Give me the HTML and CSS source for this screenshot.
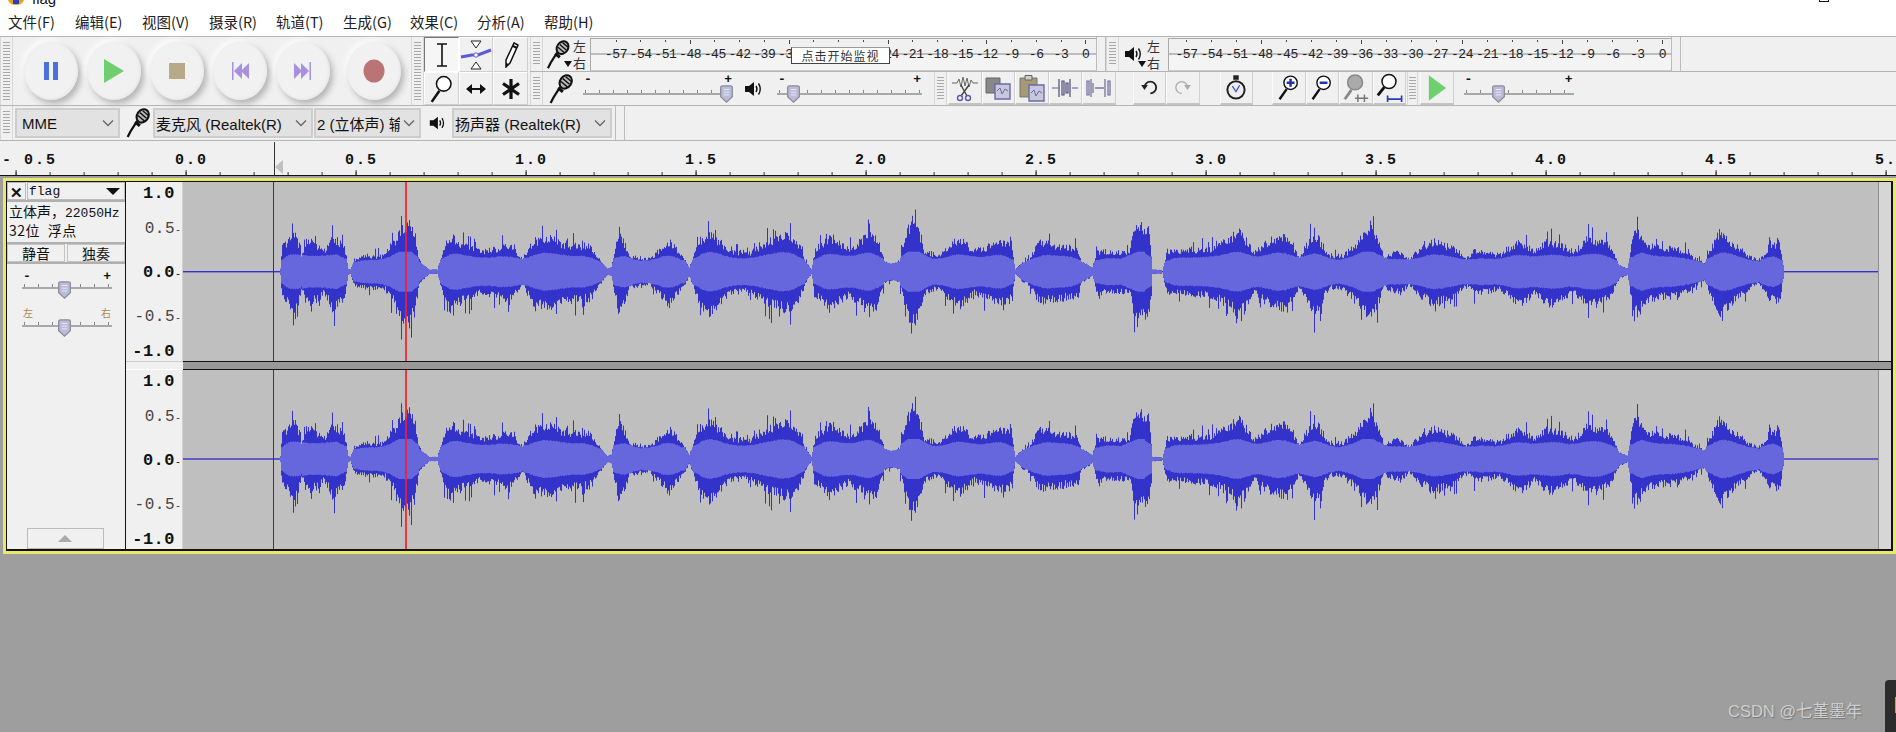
FILE: index.html
```html
<!DOCTYPE html>
<html lang="zh">
<head>
<meta charset="utf-8">
<title>flag</title>
<link rel="stylesheet" href="styles.css">
</head>
<body>
<svg class="defs" width="0" height="0">
  <symbol id="mic" viewBox="0 0 26 34">
    <path d="M2 32 L5 26 L12 15" fill="none" stroke="#111" stroke-width="2.4"/>
    <path d="M10 16 L15 20" stroke="#111" stroke-width="3.4"/>
    <ellipse cx="18" cy="9.5" rx="6" ry="7.5" transform="rotate(35 18 9.5)" fill="#bbb" stroke="#111" stroke-width="2.2"/>
    <path d="M13 9 L20 15 M15 6 L22 12 M18 4 L24 9" stroke="#111" stroke-width="1.5"/>
  </symbol>
  <symbol id="spk" viewBox="0 0 20 20">
    <path d="M2 7 H6 L11 3 V17 L6 13 H2 Z" fill="#111"/>
    <path d="M13 7 Q15 10 13 13 M15.5 4.5 Q19 10 15.5 15.5" fill="none" stroke="#111" stroke-width="1.4"/>
  </symbol>
  <symbol id="loupe" viewBox="0 0 28 34">
    <path d="M2 32 L11 19" stroke="#111" stroke-width="3"/>
    <circle cx="16" cy="11" r="8.5" fill="#fff" stroke="#111" stroke-width="1.8"/>
  </symbol>
  <symbol id="chev" viewBox="0 0 12 8">
    <path d="M1 1.5 L6 6.5 L11 1.5" fill="none" stroke="#666" stroke-width="1.3"/>
  </symbol>
  <symbol id="thumb" viewBox="0 0 16 20">
    <path d="M1.5 3 Q1.5 1 4 1 H12 Q14.5 1 14.5 3 V13 L8 19 L1.5 13 Z" fill="#b9bcd6" stroke="#8a8a9a" stroke-width="1.4"/>
    <path d="M5 5 H11 M5 8 H11 M5 11 H11" stroke="#eef" stroke-width="1"/>
  </symbol>
</svg>

<div class="titlebar">
  <svg class="app-icon" width="16" height="5" viewBox="0 0 16 5"><path d="M0 0 H16 Q14 5 8 5 Q2 5 0 0Z" fill="#e8a020"/><path d="M5 0 H11 V4 H5Z" fill="#2a40b0"/></svg>
  <span class="title-text">flag</span>
  <span class="win-max"></span>
  <span class="win-close">✕</span>
</div>

<nav class="menubar">
  <span>文件(F)</span><span>编辑(E)</span><span>视图(V)</span><span>摄录(R)</span><span>轨道(T)</span><span>生成(G)</span><span>效果(C)</span><span>分析(A)</span><span>帮助(H)</span>
</nav>

<section class="toprow">
  <div class="grip"></div>
  <div class="transport">
    <button class="tbtn"><svg width="20" height="20" viewBox="0 0 20 20"><path d="M3 1 H8 V19 H3Z M12 1 H17 V19 H12Z" fill="#4a70dc"/></svg></button>
    <button class="tbtn"><svg width="24" height="26" viewBox="0 0 24 26"><path d="M2 1 L22 13 L2 25Z" fill="#6fcf6f"/></svg></button>
    <button class="tbtn"><svg width="20" height="20" viewBox="0 0 20 20"><path d="M2 2 H18 V18 H2Z" fill="#b8aa88"/></svg></button>
    <button class="tbtn"><svg width="20" height="20" viewBox="0 0 20 20"><path d="M2 1 H3.5 V19 H2Z M19 2 V18 L11 10Z M12 2 V18 L4 10Z" fill="#a78fe2"/></svg></button>
    <button class="tbtn"><svg width="20" height="20" viewBox="0 0 20 20"><path d="M16.5 1 H18 V19 H16.5Z M1 2 V18 L9 10Z M8 2 V18 L16 10Z" fill="#a78fe2"/></svg></button>
    <button class="tbtn tbtn-rec"><svg width="24" height="26" viewBox="0 0 24 26"><ellipse cx="12" cy="13" rx="10.5" ry="11.5" fill="#bb7474"/></svg></button>
  </div>
  <div class="grip"></div>
  <div class="tools">
    <button class="tool tool-on"><svg width="14" height="24" viewBox="0 0 14 24"><path d="M2 1 H12 M2 23 H12 M7 1 V23" stroke="#111" stroke-width="1.6" fill="none"/></svg></button>
    <button class="tool"><svg width="32" height="30" viewBox="0 0 32 30"><path d="M11 1 H21 L16 8Z M11 29 H21 L16 22Z" fill="#fff" stroke="#222"/><path d="M1 17 L12 15 H18 L31 10" stroke="#5a5ad8" stroke-width="3" fill="none"/><circle cx="16" cy="15" r="2.2" fill="#fff" stroke="#5a5ad8"/></svg></button>
    <button class="tool"><svg width="16" height="26" viewBox="0 0 16 26"><path d="M11 1 L15 3 L7 21 L3 25 L3 18Z" fill="#fff" stroke="#111" stroke-width="1.5"/><path d="M10 4 L14 6" stroke="#111" stroke-width="2"/><path d="M3 25 L3 21 L6 22Z" fill="#111"/></svg></button>
    <button class="tool"><svg width="24" height="30"><use href="#loupe"/></svg></button>
    <button class="tool"><svg width="22" height="12" viewBox="0 0 22 12"><path d="M5 6 H17" stroke="#111" stroke-width="2"/><path d="M1 6 L7 1 V11Z M21 6 L15 1 V11Z" fill="#111"/></svg></button>
    <button class="tool"><svg width="20" height="22" viewBox="0 0 20 22"><path d="M10 1 V21 M2 5.5 L18 16.5 M18 5.5 L2 16.5" stroke="#111" stroke-width="3.2"/></svg></button>
  </div>
  <div class="rightcol">
    <div class="meterrow">
      <div class="grip"></div>
      <div class="mic-wrap"><svg class="mic-big" width="26" height="31"><use href="#mic"/></svg><span class="caret"></span></div>
      <div class="lr"><span>左</span><span>右</span></div>
      <div class="meter meter-rec" id="meterRec"></div>
      <div class="dbl-sep"></div>
      <div class="grip"></div>
      <div class="mic-wrap spk-wrap"><svg width="20" height="20"><use href="#spk"/></svg><span class="caret"></span></div>
      <div class="lr"><span>左</span><span>右</span></div>
      <div class="meter meter-play" id="meterPlay"></div>
      <div class="dbl-sep"></div>
    </div>
    <div class="mixrow">
      <div class="grip"></div>
      <svg class="mic-small" width="26" height="32"><use href="#mic"/></svg>
      <div class="slider slider-rec"><span class="sl-minus">-</span><span class="sl-plus">+</span><i class="sl-track"></i><svg class="sl-thumb" style="left:136px" width="15" height="18"><use href="#thumb"/></svg></div>
      <svg class="spk-small" width="20" height="20"><use href="#spk"/></svg>
      <div class="slider slider-play"><span class="sl-minus">-</span><span class="sl-plus">+</span><i class="sl-track"></i><svg class="sl-thumb" style="left:9px" width="15" height="18"><use href="#thumb"/></svg></div>
      <div class="grip grip-edit"></div>
      <div class="editgroup">
        <button class="ebtn"><svg width="28" height="28" viewBox="0 0 28 28"><path d="M1 9 H6 L8 5 L10 13 L12 3 L14 12 L16 4 L18 13 L20 6 L22 9 H27" fill="none" stroke="#666" stroke-width="1"/><path d="M18 11 L10 22 M10 11 L16 22" stroke="#444" stroke-width="1.4"/><circle cx="9" cy="24" r="2.5" fill="none" stroke="#5a5aa8" stroke-width="1.4"/><circle cx="17" cy="24" r="2.5" fill="none" stroke="#5a5aa8" stroke-width="1.4"/></svg></button>
        <button class="ebtn"><svg width="28" height="26" viewBox="0 0 28 26"><path d="M2 3 H16 V18 H2Z" fill="#888" stroke="#666"/><path d="M11 9 H26 V24 H11Z" fill="#c8c8dc" stroke="#6a6aa8" stroke-width="1.4"/><path d="M13 16 L16 13 L18 19 L21 14 L24 16" fill="none" stroke="#6a6aa8"/></svg></button>
        <button class="ebtn"><svg width="28" height="28" viewBox="0 0 28 28"><path d="M2 4 H19 V23 H2Z" fill="#a59a74" stroke="#777"/><path d="M7 1.5 H14 V6 H7Z" fill="#ccc" stroke="#666"/><path d="M11 11 H26 V27 H11Z" fill="#c8c8dc" stroke="#6a6aa8" stroke-width="1.4"/><path d="M13 19 L16 16 L18 22 L21 17 L24 19" fill="none" stroke="#6a6aa8"/></svg></button>
        <button class="ebtn"><svg width="28" height="22" viewBox="0 0 28 22"><path d="M1 11 H7 M21 11 H27" stroke="#5a5a88" stroke-width="1.2"/><path d="M8 2 V20 M11 4 H13 V18 H11Z M15 6 H17 V16 H15Z M19 2 V20" fill="none" stroke="#4a4a78" stroke-width="1.2"/></svg></button>
        <button class="ebtn"><svg width="28" height="22" viewBox="0 0 28 22"><path d="M10 11 H19" stroke="#5a5a88" stroke-width="1.2"/><path d="M2 4 H4 V18 H2Z M6 2 V20 M8 6 V16 M20 2 V20 M23 4 H25 V18 H23Z" fill="none" stroke="#6a6a98" stroke-width="1.2"/></svg></button>
      </div>
      <div class="undogroup">
        <button class="ebtn"><svg width="17" height="15" viewBox="0 0 20 18"><path d="M4 9 A7 7 0 1 1 11 16" fill="none" stroke="#222" stroke-width="2.2"/><path d="M0 6 H8 L4 12Z" fill="#222"/></svg></button>
        <button class="ebtn"><svg width="17" height="15" viewBox="0 0 20 18"><path d="M16 9 A7 7 0 1 0 9 16" fill="none" stroke="#aaa" stroke-width="1.6"/><path d="M20 6 H12 L16 12Z" fill="#aaa"/></svg></button>
      </div>
      <button class="ebtn ebtn-clock"><svg width="20" height="28" viewBox="0 0 22 30"><path d="M8 1 H14 V6 H8Z" fill="#222"/><circle cx="11" cy="17" r="9.5" fill="#eee" stroke="#222" stroke-width="2.2"/><path d="M7 13 L11 19 L15 12" fill="none" stroke="#3a4ac0" stroke-width="1.3"/></svg></button>
      <div class="zoomgroup">
        <button class="ebtn"><svg width="22" height="27" viewBox="0 0 28 34"><use href="#loupe" width="28" height="34"/><path d="M11 11 H21 M16 6 V16" stroke="#2233aa" stroke-width="3.2"/></svg></button>
        <button class="ebtn"><svg width="22" height="27" viewBox="0 0 28 34"><use href="#loupe" width="28" height="34"/><path d="M11 11 H21" stroke="#2233aa" stroke-width="3.2"/></svg></button>
        <button class="ebtn"><svg width="28" height="30" viewBox="0 0 30 32"><path d="M3 28 L10 18" stroke="#888" stroke-width="3"/><circle cx="14" cy="10" r="8" fill="#aaa" stroke="#888" stroke-width="1.6"/><path d="M14 27 H28 M17 23 V31 M24 23 V31" stroke="#777" stroke-width="1.6"/></svg></button>
        <button class="ebtn"><svg width="28" height="30" viewBox="0 0 30 32"><path d="M3 24 L10 15" stroke="#111" stroke-width="3"/><circle cx="15" cy="9" r="7.5" fill="#fff" stroke="#111" stroke-width="1.6"/><path d="M13 28 H29 M13.5 24 V31 M28.5 24 V31" stroke="#2a3ab8" stroke-width="1.8"/></svg></button>
      </div>
      <div class="grip grip-play"></div>
      <button class="ebtn ebtn-play"><svg width="20" height="28" viewBox="0 0 22 30"><path d="M2 1 L21 15 L2 29Z" fill="#6fcf6f"/></svg></button>
      <div class="slider slider-speed"><span class="sl-minus">-</span><span class="sl-plus">+</span><i class="sl-track"></i><svg class="sl-thumb" style="left:27px" width="15" height="18"><use href="#thumb"/></svg></div>
    </div>
  </div>
</section>

<section class="devicerow">
  <div class="grip"></div>
  <div class="combo combo-host"><span>MME</span><svg width="12" height="8"><use href="#chev"/></svg></div>
  <svg class="dev-mic" width="26" height="32"><use href="#mic"/></svg>
  <div class="combo combo-in"><span>麦克风 (Realtek(R)</span><svg width="12" height="8"><use href="#chev"/></svg></div>
  <div class="combo combo-ch"><span>2 (立体声) 输入声道</span><svg width="12" height="8"><use href="#chev"/></svg></div>
  <svg class="dev-spk" width="18" height="18"><use href="#spk"/></svg>
  <div class="combo combo-out"><span>扬声器 (Realtek(R)</span><svg width="12" height="8"><use href="#chev"/></svg></div>
  <div class="dbl-sep"></div>
</section>

<section class="ruler">
  <span class="rcell rcell-first">- 0.5</span><span class="rcell">0.0</span><span class="rcell">0.5</span><span class="rcell">1.0</span><span class="rcell">1.5</span><span class="rcell">2.0</span><span class="rcell">2.5</span><span class="rcell">3.0</span><span class="rcell">3.5</span><span class="rcell">4.0</span><span class="rcell">4.5</span><span class="rcell">5.0</span>
  <i class="ruler-sel"></i>
</section>

<section class="track">
  <div class="panel">
    <div class="panel-head">
      <button class="p-close">✕</button>
      <button class="p-name"><span>flag</span><i class="p-arrow"></i></button>
    </div>
    <div class="p-info">
      <div>立体声，<span class="mono">22050Hz</span></div>
      <div class="p-info-2">32位 浮点</div>
    </div>
    <div class="p-btns"><button>静音</button><button>独奏</button></div>
    <div class="slider slider-gain"><span class="sl-minus">-</span><span class="sl-plus">+</span><i class="sl-track"></i><svg class="sl-thumb" style="left:35px" width="15" height="18"><use href="#thumb"/></svg></div>
    <div class="slider slider-pan"><span class="sl-minus">左</span><span class="sl-plus">右</span><i class="sl-track"></i><svg class="sl-thumb" style="left:35px" width="15" height="18"><use href="#thumb"/></svg></div>
    <div class="p-spacer"></div>
    <button class="p-collapse"><i></i></button>
  </div>
  <div class="channels">
    <div class="channel">
      <div class="vruler"><b>1.0</b><span>0.5</span><b>0.0</b><span>-0.5</span><b>-1.0</b></div>
      <div class="wave"><svg class="wave-svg" width="1695" height="179"></svg><i class="sel-line"></i><i class="play-line"></i></div>
      <div class="strip"></div>
    </div>
    <div class="divider"><div class="div-left"></div><div class="div-right"></div></div>
    <div class="channel">
      <div class="vruler"><b>1.0</b><span>0.5</span><b>0.0</b><span>-0.5</span><b>-1.0</b></div>
      <div class="wave"><svg class="wave-svg" width="1695" height="179"></svg><i class="sel-line"></i><i class="play-line"></i></div>
      <div class="strip"></div>
    </div>
  </div>
</section>

<div class="monitor-tip">点击开始监视</div>
<div class="watermark">CSDN @七堇墨年</div>
<div class="sidewidget"><i></i></div>
<script src="script.js"></script>
</body>
</html>
```
FILE: styles.css
```css
* { box-sizing: border-box; }
html, body { margin: 0; padding: 0; }
body {
  width: 1896px; height: 732px; overflow: hidden; position: relative;
  background: #9e9e9e;
  font-family: "Liberation Sans", "Noto Sans CJK SC", sans-serif;
  color: #111;
}
button { font: inherit; color: inherit; margin: 0; padding: 0; }
.defs { position: absolute; }

.titlebar { height: 7px; background: #fff; display: flex; overflow: hidden; padding-left: 8px; align-items: flex-start; }
.title-text { margin: -10px 0 0 8px; font-size: 15px; line-height: 17px; }
.win-max { margin-left: auto; width: 10px; height: 2px; border: 1px solid #111; border-top: 0; }
.win-close { margin: -9px 5px 0 52px; font-size: 12px; line-height: 12px; }

.menubar { height: 29px; background: #fff; display: flex; align-items: center; padding-left: 8px; font-size: 14.5px; font-family: "Noto Sans CJK SC", sans-serif; color: #222; }
.menubar span { flex: none; width: 67px; white-space: nowrap; }

.toprow { display: flex; height: 70px; background: #f0f0f0; border-top: 1px solid #b4b4b4; border-bottom: 1px solid #b4b4b4; }
.grip {
  flex: none; width: 13px; background: #f0f0f0 repeating-linear-gradient(#a8a8a8 0 1px, transparent 1px 3px) center / 7px calc(100% - 10px) no-repeat;
  border-left: 1px solid #d8d8d8; border-right: 1px solid #d8d8d8;
}
.transport { flex: none; width: 398px; display: flex; align-items: center; padding-left: 11px; gap: 9px; }
.tbtn {
  flex: none; width: 54px; height: 58px; border-radius: 50%; border: 0; display: flex; align-items: center; justify-content: center;
  background: #f1f1f1; box-shadow: 3px 4px 6px #b4b4b4, -3px -3px 4px #fafafa, inset -1px -1px 3px #e6e6e6;
}
.tbtn-rec { margin-left: 8px; }
.tools { flex: none; width: 104px; display: grid; grid-template-columns: 35px 34px 35px; grid-template-rows: 35px 33px; }
.tool { display: flex; align-items: center; justify-content: center; background: #f0f0f0; border: 1px solid; border-color: #fff #cfcfcf #cfcfcf #fff; }
.tool-on { border-color: #777 #fff #fff #777; background: #f6f6f6; }
.rightcol { flex: 1; display: flex; flex-direction: column; margin-left: 2px; }
.meterrow { flex: none; height: 35px; display: flex; border-bottom: 1px solid #b4b4b4; }
.mic-wrap { flex: none; width: 30px; position: relative; display: flex; align-items: center; padding-left: 2px; }
.spk-wrap { width: 28px; padding-left: 4px; }
.caret { position: absolute; right: 1px; bottom: 4px; border: 4px solid transparent; border-top: 6px solid #111; border-bottom: 0; }
.lr { flex: none; width: 17px; display: flex; flex-direction: column; justify-content: space-around; font-size: 13px; line-height: 15px; font-family: "Noto Sans CJK SC", sans-serif; color: #333; }
.meter {
  flex: none; display: flex; height: 33px; margin-top: 1px;
  border-left: 1px solid #aaa; border-top: 1px solid #aaa; border-bottom: 1px solid #ccc;
  background: linear-gradient(#f0f0f0 14px, #bdbdbd 14px, #bdbdbd 16px, #f4f4f4 16px);
  font: 13px/1 "Liberation Mono", monospace; color: #222;
}
.meter-rec { width: 506px; padding-left: 12.6px; }
.meter-rec .mcell { width: 24.73px; }
.meter-play { width: 503px; padding-left: 5px; margin-left: 4px; }
.mcell { flex: none; width: 25.05px; text-align: center; position: relative; padding-top: 9px; letter-spacing: -.4px; white-space: nowrap; }
.mcell::before { content: ""; position: absolute; left: 12px; top: 1px; width: 1px; height: 2px; background: #444; }
.mcell.major::before { height: 4px; }
.dbl-sep { flex: none; width: 10px; border-left: 1px solid #bbb; border-right: 1px solid #bbb; }

.mixrow { flex: 1; display: flex; align-items: center; }
.mixrow > .grip { align-self: stretch; }
.mic-small { flex: none; margin: 0 9px 0 5px; }
.spk-small { flex: none; margin: 0 14px 0 10px; }
.slider { flex: none; position: relative; height: 32px; }
.sl-minus, .sl-plus { position: absolute; top: 0; font: bold 13px/14px "Liberation Mono", "Noto Sans CJK SC", monospace; }
.sl-minus { left: 1px; }
.sl-plus { right: 1px; }
.sl-track {
  position: absolute; left: 0; right: 0; top: 14px; height: 8px; border-bottom: 2px solid #a8a8a8;
  background: linear-gradient(90deg, #888 1px, transparent 1px) 2px 3px / 14px 3px repeat-x;
}
.sl-thumb { position: absolute; top: 12px; }
.slider-rec { width: 150px; }
.slider-play { width: 145px; }
.slider-speed { width: 110px; margin-left: 10px; }
.grip-edit { margin-left: 12px; margin-right: 1px; }
.grip-play { margin-left: 1px; width: 11px; margin-right: 2px; }
.editgroup, .undogroup, .zoomgroup { flex: none; display: flex; align-self: stretch; }
.undogroup { margin-left: 17px; }
.zoomgroup { margin-left: 19px; }
.ebtn {
  flex: none; width: 33.5px; display: flex; align-items: center; justify-content: center; align-self: stretch;
  background: #f0f0f0; border: 0; border-left: 1px solid #fbfbfb; border-right: 1px solid #d0d0d0; border-bottom: 2px solid #c4c4c4;
}
.ebtn-clock { margin-left: 20px; }

.devicerow { display: flex; height: 35px; align-items: center; background: #f0f0f0; border-bottom: 1px solid #b4b4b4; font-size: 15px; font-family: "Liberation Sans", "Noto Sans CJK SC", sans-serif; }
.devicerow > .grip { align-self: stretch; }
.devicerow > .dbl-sep { align-self: stretch; margin-left: 3px; }
.combo { flex: none; height: 30px; display: flex; align-items: center; justify-content: space-between; background: #e2e2e2; border: 2px solid #cdcdcd; padding: 0 4px 0 1px; overflow: hidden; }
.combo span { flex: 1; overflow: hidden; white-space: nowrap; min-width: 0; }
.combo svg { flex: none; margin-left: 3px; }
.combo-host { width: 105px; margin-left: 2px; padding-left: 5px; }
.dev-mic { flex: none; margin: 0 2px 0 5px; }
.combo-in { width: 160px; }
.combo-ch { width: 107px; margin-left: 1px; }
.dev-spk { flex: none; margin: 0 6px 0 7px; }
.combo-out { width: 160px; }

.ruler {
  display: flex; height: 35px; padding: 10px 0 0 2px; position: relative; overflow: hidden;
  border-bottom: 1px solid #111; white-space: nowrap;
  font: bold 15px/20px "Liberation Mono", monospace; letter-spacing: 2px; color: #111;
  background-color: #f0f0f0;
  background-image: linear-gradient(90deg, #333 1px, transparent 1px), linear-gradient(90deg, #333 1px, transparent 1px);
  background-size: 34px 3px, 170px 5px;
  background-position: 15.6px 100%, 15.6px 100%;
  background-repeat: repeat-x;
}
.rcell { flex: none; width: 170px; }
.rcell-first { width: 173px; }
.ruler-sel { position: absolute; left: 274px; top: 1px; bottom: 0; width: 1px; background: #333; }
.ruler-sel::after { content: ""; position: absolute; left: 1px; bottom: 1px; border: 7px solid transparent; border-left: 0; border-right: 8px solid #c0c0c0; }

.track {
  display: flex; box-sizing: content-box; width: 1885px; height: 367px; margin: 2px 0 0 3px;
  border: 3px solid #e8e86c; background: #111; padding: 1px 2px 2px 0;
}
.panel { flex: none; width: 120px; background: #f0f0f0; border-right: 1px solid #111; border-left: 1px solid #111; display: flex; flex-direction: column; font-family: "Noto Sans CJK SC", sans-serif; font-size: 14px; }
.panel-head { display: flex; height: 20px; border-bottom: 2px solid #b0b0b0; }
.panel-head button { background: #f0f0f0; border: 1px solid #bbb; }
.p-close { flex: none; width: 19px; font-size: 15px; line-height: 15px; font-weight: bold; }
.p-name { flex: 1; margin-left: 1px; display: flex; align-items: center; justify-content: space-between; padding: 0 3px 0 1px; font: 13px "Liberation Mono", monospace; }
.p-arrow { border: 7px solid transparent; border-top: 7px solid #111; border-bottom: 0; margin-right: 1px; }
.p-info { height: 42px; padding: 0 0 0 2px; font-size: 14px; line-height: 19px; border-bottom: 2px solid #b0b0b0; white-space: nowrap; }
.p-info-2 { word-spacing: 4px; letter-spacing: .5px; }
.mono { font: 13px "Liberation Mono", monospace; }
.p-btns { display: flex; height: 20px; gap: 2px; border-bottom: 2px solid #b0b0b0; }
.p-btns button { flex: 1; background: #f0f0f0; border: 1px solid #c4c4c4; line-height: 16px; font-size: 14px; }
.slider-gain, .slider-pan { width: 90px; margin: 6px 0 0 15px; height: 26px; }
.slider-pan { margin-top: 12px; }
.slider-pan .sl-minus, .slider-pan .sl-plus { font: 10px/10px "Noto Sans CJK SC", sans-serif; color: #a85; }
.slider-gain .sl-track, .slider-pan .sl-track { top: 11px; }
.slider-gain .sl-thumb, .slider-pan .sl-thumb { top: 11px; }
.p-spacer { flex: 1; }
.p-collapse { flex: none; align-self: center; width: 77px; height: 21px; margin-right: 2px; background: #f0f0f0; border: 1px solid #bbb; display: flex; align-items: center; justify-content: center; }
.p-collapse i { border: 7px solid transparent; border-bottom: 7px solid #aaa; border-top: 0; }
.channels { flex: 1; display: flex; flex-direction: column; }
.channel { flex: none; height: 179px; display: flex; }
.vruler {
  flex: none; width: 57px; background: #f0f0f0; display: grid; grid-template-rows: 20px 52px 36px 52px 16px; align-items: center; justify-items: end;
  padding: 2px 1px 0 0; border-right: 1px solid #d0d0d0;
  font: 16px/16px "Liberation Mono", monospace; letter-spacing: .5px; color: #444;
}
.vruler b { color: #111; font-size: 17px; }
.vruler span::after, .vruler b:nth-child(3)::after { content: "-"; font-weight: normal; letter-spacing: 0; font-size: 10px; }
.vruler b:nth-child(1), .vruler b:nth-child(5) { padding-right: 6px; }
.wave { flex: none; width: 1695px; position: relative; background: #bfbfbf; }
.wave-svg { display: block; }
.sel-line { position: absolute; left: 90px; top: 0; bottom: 0; width: 1px; background: #3a3a3a; }
.play-line { position: absolute; left: 222px; top: 0; bottom: 0; width: 2px; background: rgba(245, 30, 40, .85); }
.strip { flex: 1; background: #d6d6d6; border-left: 1px solid #8e8e8e; }
.divider { flex: none; height: 9px; display: flex; }
.div-left { width: 57px; background: #f0f0f0; border-bottom: 1px solid #fff; border-top: 1px solid #ccc; }
.div-right { flex: 1; background: #999; border-top: 1px solid #111; border-bottom: 1px solid #111; }

.monitor-tip {
  position: absolute; left: 791px; top: 47px; width: 99px; height: 17px; background: #fff; border: 1px solid #444; border-top-color: #999;
  font: 12px/15px "Noto Sans CJK SC", sans-serif; text-align: center; color: #333; letter-spacing: 1px;
}
.watermark { position: absolute; left: 1728px; top: 701px; font: 16.5px/20px "Liberation Sans", "Noto Sans CJK SC", sans-serif; color: #cfcfcf; text-shadow: 1px 1px 1px #777; white-space: nowrap; }
.sidewidget { position: absolute; left: 1885px; top: 680px; width: 11px; height: 52px; background: #2c2c2c; border-radius: 4px 0 0 0; padding: 17px 0 0 10px; }
.sidewidget i { display: block; width: 1px; height: 16px; background: #e89a20; }
```
FILE: script.js
```js
// Amplitude envelope of the recording, as [x on screen, half height in px].
var ENV = [[184,1],[280,1],[281,3],[283,25],[290,30],[295,38],[300,25],[302,15],[310,30],[325,20],[333,33],[345,25],[349,3],[351,2],[355,12],[365,15],[385,15],[395,28],[405,44],[415,40],[420,10],[425,6],[430,2],[438,2],[445,25],[450,35],[460,28],[480,20],[500,22],[510,27],[520,15],[523,12],[535,30],[550,33],[565,25],[590,25],[600,12],[608,3],[612,4],[620,40],[630,15],[650,12],[670,30],[685,12],[690,4],[700,30],[710,38],[730,20],[750,18],[775,32],[790,35],[800,25],[806,10],[812,2],[816,22],[830,32],[850,22],[870,35],[878,32],[885,10],[892,8],[900,10],[905,30],[912,50],[920,38],[925,20],[940,15],[950,25],[960,32],[975,20],[1000,28],[1012,25],[1016,2],[1022,8],[1030,12],[1040,28],[1060,25],[1078,22],[1082,10],[1093,4],[1098,20],[1130,18],[1135,40],[1150,40],[1153,2],[1163,1.5],[1168,20],[1180,20],[1210,22],[1230,30],[1240,40],[1255,18],[1270,30],[1285,35],[1297,20],[1300,14],[1315,38],[1330,15],[1345,16],[1360,30],[1370,44],[1378,30],[1385,14],[1400,20],[1410,12],[1420,22],[1435,30],[1455,22],[1468,12],[1475,20],[1500,16],[1520,30],[1535,20],[1550,30],[1575,20],[1590,32],[1610,25],[1620,6],[1628,3],[1635,40],[1650,25],[1680,22],[1705,8],[1720,38],[1730,30],[1750,15],[1760,10],[1770,25],[1780,28],[1785,1],[1879,1]];
var LEFT = 184, WIDTH = 1695;

function envAt(x) {
  for (var i = 1; i < ENV.length; i++) {
    if (x <= ENV[i][0]) {
      var a = ENV[i - 1], b = ENV[i];
      return a[1] + (b[1] - a[1]) * (x - a[0]) / (b[0] - a[0]);
    }
  }
  return 1;
}

function makeRandom(seed) {
  return function () {
    seed = (seed * 1664525 + 1013904223) % 4294967296;
    return seed / 4294967296;
  };
}

function build(svg, mid, seed) {
  var rnd = makeRandom(seed), outer = "", inner = "", x, i;
  var base = [];
  for (x = 0; x < WIDTH; x++) base.push(envAt(LEFT + x));
  for (x = 0; x < WIDTH; x++) {
    var e = base[x], sum = 0, n = 0;
    for (i = Math.max(0, x - 10); i <= Math.min(WIDTH - 1, x + 10); i++) { sum += base[i]; n++; }
    var up = e * (0.85 + 0.32 * rnd()), dn = e * (0.88 + 0.36 * rnd());
    if (e > 8) {
      if (rnd() < 0.07) up *= 1.35;
      if (rnd() < 0.08) dn *= 1.42;
    }
    var rms = Math.min(20, Math.min(e, sum / n * 0.42 + 5 + rnd()));
    if (e <= 1.5) { up = dn = 0.7; rms = 0; }
    outer += "M" + (x + .5) + " " + (mid - up).toFixed(1) + "V" + (mid + dn).toFixed(1);
    if (rms > 0) inner += "M" + (x + .5) + " " + (mid - rms).toFixed(1) + "V" + (mid + rms).toFixed(1);
  }
  svg.innerHTML = '<path d="' + outer + '" stroke="#3333cc" stroke-width="1" fill="none"/>' +
                  '<path d="' + inner + '" stroke="#6666dd" stroke-width="1" fill="none"/>';
}

var waves = document.querySelectorAll(".wave-svg");
build(waves[0], 89.7, 12345);
build(waves[1], 89, 12345);

function fillMeter(id) {
  var el = document.getElementById(id), html = "";
  for (var db = -57; db <= 0; db += 3) {
    var major = db % 12 === 0;
    html += '<span class="mcell' + (major ? " major" : "") + '">' + (db === 0 ? "0" : db) + "</span>";
  }
  el.innerHTML = html;
}
fillMeter("meterRec");
fillMeter("meterPlay");
```
